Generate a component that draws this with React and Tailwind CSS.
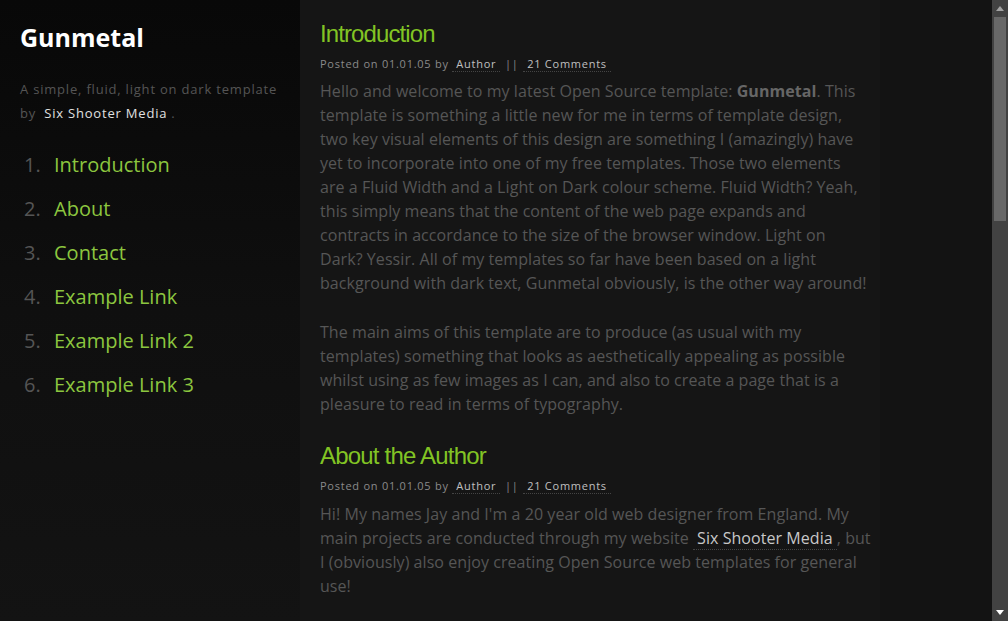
const sans = "font-['Open_Sans',sans-serif]";

function Meta() {
  return (
    <div className={`${sans} mt-[6px] text-[11px] leading-5 tracking-[0.75px] text-[#8a8a8a]`}>
      Posted on 01.01.05 by{" "}
      <span className="border-b border-dotted border-[#444] px-[4px] text-[#c0c0c0]">Author</span>{" "}
      <span className="px-[1px]">||</span>{" "}
      <span className="border-b border-dotted border-[#444] px-[4px] text-[#c0c0c0]">21 Comments</span>
    </div>
  );
}

function Lines({ lines }) {
  return lines.map((l, i) => (
    <span key={i} className="block whitespace-nowrap">
      {l}
    </span>
  ));
}

export default function App() {
  const nav = ["Introduction", "About", "Contact", "Example Link", "Example Link 2", "Example Link 3"];
  return (
    <div className={`${sans} flex h-[621px] w-[1008px] overflow-hidden bg-[#131313]`}>
      <aside className="w-[300px] shrink-0 bg-linear-to-b from-[#080808] via-[#0f0f0f] to-[#131313] px-5 pt-5">
        <h1 className="text-[25px] font-bold leading-[34px] text-white">Gunmetal</h1>
        <p className="mt-[23px] whitespace-nowrap text-[13px] leading-6 tracking-[0.8px] text-[#555]">
          A simple, fluid, light on dark template
          <br />
          by <span className="px-[4px] text-[#e0e0e0]">Six Shooter Media</span>.
        </p>
        <ol className="mt-[18px]">
          {nav.map((n, i) => (
            <li key={n} className="flex text-[20px] leading-[44px]">
              <span className="w-[34px] pl-1 text-[#555]">{i + 1}.</span>
              <span className="text-[#8cc63f]">{n}</span>
            </li>
          ))}
        </ol>
      </aside>
      <main className="w-[580px] shrink-0 bg-[#151515] pl-5 pt-5">
        <h2 className="font-['Liberation_Sans',Arial,sans-serif] text-[24px] leading-[28px] tracking-[-0.9px] text-[#82c424]">
          Introduction
        </h2>
        <Meta />
        <div className="mt-[5px] text-[16px] leading-6 tracking-[0.06px] text-[#565656]">
          <span className="block whitespace-nowrap">
            Hello and welcome to my latest Open Source template: <b className="text-[#666]">Gunmetal</b>. This
          </span>
          <Lines
            lines={[
              "template is something a little new for me in terms of template design,",
              "two key visual elements of this design are something I (amazingly) have",
              "yet to incorporate into one of my free templates. Those two elements",
              "are a Fluid Width and a Light on Dark colour scheme. Fluid Width? Yeah,",
              "this simply means that the content of the web page expands and",
              "contracts in accordance to the size of the browser window. Light on",
              "Dark? Yessir. All of my templates so far have been based on a light",
              "background with dark text, Gunmetal obviously, is the other way around!",
            ]}
          />
        </div>
        <div className="mt-[25px] text-[16px] leading-6 tracking-[0.06px] text-[#565656]">
          <Lines
            lines={[
              "The main aims of this template are to produce (as usual with my",
              "templates) something that looks as aesthetically appealing as possible",
              "whilst using as few images as I can, and also to create a page that is a",
              "pleasure to read in terms of typography.",
            ]}
          />
        </div>
        <h2 className="mt-[26px] font-['Liberation_Sans',Arial,sans-serif] text-[24px] leading-[28px] tracking-[-0.8px] text-[#82c424]">
          About the Author
        </h2>
        <Meta />
        <div className="mt-[6px] text-[16px] leading-6 tracking-[0.06px] text-[#565656]">
          <span className="block whitespace-nowrap">
            Hi! My names Jay and I'm a 20 year old web designer from England. My
          </span>
          <span className="block whitespace-nowrap">
            main projects are conducted through my website{" "}
            <span className="border-b border-dotted border-[#444] px-[4px] text-[#c8c8c8]">Six Shooter Media</span>, but
          </span>
          <span className="block whitespace-nowrap">
            I (obviously) also enjoy creating Open Source web templates for general
          </span>
          <span className="block whitespace-nowrap">use!</span>
        </div>
      </main>
      <div className="flex-1" />
      <div className="flex w-4 shrink-0 flex-col bg-[#424242]">
        <div className="flex h-[17px] items-center justify-center">
          <svg width="8" height="5" viewBox="0 0 8 5">
            <path d="M0 5 L4 0 L8 5 Z" fill="#a3a3a3" />
          </svg>
        </div>
        <div className="mx-[2px] h-[204px] bg-[#686868]" />
        <div className="flex-1" />
        <div className="flex h-[17px] items-center justify-center">
          <svg width="8" height="5" viewBox="0 0 8 5">
            <path d="M0 0 L8 0 L4 5 Z" fill="#ffffff" />
          </svg>
        </div>
      </div>
    </div>
  );
}
